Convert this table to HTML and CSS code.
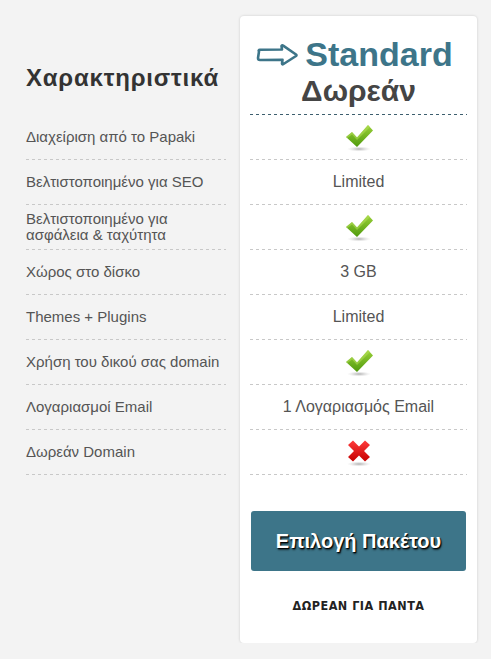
FILE: index.html
```html
<!DOCTYPE html>
<html lang="el">
<head>
<meta charset="utf-8">
<link rel="stylesheet" href="styles.css">
</head>
<body>
<svg width="0" height="0" class="defs">
  <defs>
    <linearGradient id="gg" x1="0" y1="0" x2="0" y2="1">
      <stop offset="0" stop-color="#9bd13a"/>
      <stop offset="1" stop-color="#4f9a0c"/>
    </linearGradient>
    <linearGradient id="rg" x1="0" y1="0" x2="0" y2="1">
      <stop offset="0" stop-color="#ff3b3b"/>
      <stop offset="1" stop-color="#c40000"/>
    </linearGradient>
    <radialGradient id="sh">
      <stop offset="0" stop-color="#9a9a9a" stop-opacity=".8"/>
      <stop offset="1" stop-color="#cfcfcf" stop-opacity="0"/>
    </radialGradient>
    <symbol id="check" viewBox="0 0 30 28">
      <ellipse cx="15" cy="25" rx="12" ry="2.6" fill="url(#sh)"/>
      <path d="M2 13 L8 8 L13 13.5 L24 1 L29 6.5 L13 23 Z" fill="url(#gg)"/>
      <path d="M8 8 L13 13.5 L24 1 L26 3 L13 16 L8 10.5 L3.5 14 L2 13 Z" fill="#b7e25c" opacity=".5"/>
    </symbol>
    <symbol id="cross" viewBox="0 0 30 28">
      <ellipse cx="15" cy="25" rx="12" ry="2.6" fill="url(#sh)"/>
      <path d="M4 6 L9 1.5 L15 7.5 L21 1.5 L26 6 L20 12 L26 18 L21 22.5 L15 16.5 L9 22.5 L4 18 L10 12 Z" fill="url(#rg)"/>
    </symbol>
  </defs>
</svg>
<div class="page">
  <div class="features">
    <div class="features-head">Χαρακτηριστικά</div>
    <div class="frow">Διαχείριση από το Papaki</div>
    <div class="frow">Βελτιστοποιημένο για SEO</div>
    <div class="frow">Βελτιστοποιημένο για<br>ασφάλεια &amp; ταχύτητα</div>
    <div class="frow">Χώρος στο δίσκο</div>
    <div class="frow">Themes + Plugins</div>
    <div class="frow">Χρήση του δικού σας domain</div>
    <div class="frow">Λογαριασμοί Email</div>
    <div class="frow">Δωρεάν Domain</div>
  </div>
  <div class="card">
    <div class="card-head">
      <div class="plan">
        <svg class="arrow" width="42" height="22" viewBox="0 0 42 22">
          <path d="M3 7.5 Q2 6 4 5.8 L26 5.5 L25.5 2 Q26 0.8 27.5 1.8 L40 10.5 Q41 11.3 40 12 L27.5 20 Q26 21 26 19.5 L26.5 15.8 L4 16 Q2 16 2 14 Z" fill="none" stroke="#3d7589" stroke-width="2.6" stroke-linejoin="round"/>
        </svg>
        <span class="plan-name">Standard</span>
      </div>
      <div class="price">Δωρεάν</div>
    </div>
    <div class="crow"><svg class="ico"><use href="#check"/></svg></div>
    <div class="crow">Limited</div>
    <div class="crow"><svg class="ico"><use href="#check"/></svg></div>
    <div class="crow">3 GB</div>
    <div class="crow">Limited</div>
    <div class="crow"><svg class="ico"><use href="#check"/></svg></div>
    <div class="crow">1 Λογαριασμός Email</div>
    <div class="crow"><svg class="ico"><use href="#cross"/></svg></div>
    <div class="card-foot">
      <button class="btn">Επιλογή Πακέτου</button>
      <div class="forever">ΔΩΡΕΑΝ ΓΙΑ ΠΑΝΤΑ</div>
    </div>
  </div>
</div>
</body>
</html>
```
FILE: styles.css
```css
html, body {
  margin: 0;
  padding: 0;
  background: #f3f3f3;
  font-family: "Liberation Sans", Arial, sans-serif;
  color: #555;
}
.defs {
  position: absolute;
  width: 0;
  height: 0;
}
.page {
  display: flex;
  align-items: flex-start;
  padding: 16px 0 0 26px;
}
.features {
  width: 200px;
  margin-right: 14px;
}
.features-head {
  height: 99px;
  box-sizing: border-box;
  padding-top: 48px;
  font-size: 24px;
  line-height: 28px;
  font-weight: bold;
  color: #333;
  letter-spacing: 0.8px;
  white-space: nowrap;
}
.frow {
  height: 45px;
  box-sizing: border-box;
  display: flex;
  align-items: center;
  font-size: 15px;
  line-height: 16px;
  color: #555;
  padding-bottom: 1px;
  white-space: nowrap;
  background: repeating-linear-gradient(to right, #c8c8c8 0 3px, transparent 3px 6px) left bottom / 100% 1px no-repeat;
}
.card {
  width: 237px;
  box-sizing: border-box;
  background: #fff;
  border-radius: 4px;
  box-shadow: 0 0 2px 1px rgba(0, 0, 0, 0.08);
  padding: 0 10px 0 10px;
  height: 627px;
}
.card-head {
  height: 99px;
  box-sizing: border-box;
  padding-top: 19px;
  display: flex;
  flex-direction: column;
  align-items: center;
  background: repeating-linear-gradient(to right, #3d5f6e 0 3px, transparent 3px 6px) left bottom / 100% 1px no-repeat;
}
.plan {
  display: flex;
  align-items: center;
  gap: 7px;
  margin-left: -8px;
}
.arrow {
  display: block;
  margin-top: 2px;
}
.plan-name {
  font-size: 34px;
  line-height: 38px;
  font-weight: bold;
  color: #3d7589;
}
.price {
  font-size: 30px;
  line-height: 35px;
  font-weight: bold;
  color: #454545;
  margin-left: 0;
}
.crow {
  height: 45px;
  box-sizing: border-box;
  display: flex;
  align-items: center;
  justify-content: center;
  font-size: 16px;
  color: #555;
  padding-bottom: 1px;
  background: repeating-linear-gradient(to right, #c8c8c8 0 3px, transparent 3px 6px) left bottom / 100% 1px no-repeat;
}
.ico {
  width: 30px;
  height: 28px;
  margin-top: 2px;
}
.card-foot {
  padding-top: 36px;
  display: flex;
  flex-direction: column;
  align-items: center;
}
.btn {
  width: 215px;
  height: 60px;
  border: 0;
  border-radius: 3px;
  background: #3d7589;
  color: #fff;
  font-family: "Liberation Sans", Arial, sans-serif;
  font-size: 20px;
  font-weight: bold;
  text-shadow: 1px 1px 1px #000, 1px 2px 2px rgba(0,0,0,.6);
  cursor: pointer;
}
.forever {
  margin-top: 27px;
  font-family: "DejaVu Sans Condensed", "Liberation Sans", sans-serif;
  font-stretch: condensed;
  font-size: 12.5px;
  font-weight: bold;
  color: #222;
  letter-spacing: 0.5px;
}
```
